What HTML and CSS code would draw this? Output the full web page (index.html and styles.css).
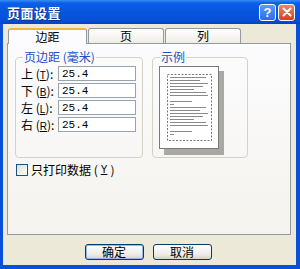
FILE: index.html
```html
<!DOCTYPE html>
<html lang="zh-CN">
<head>
<meta charset="utf-8">
<title>页面设置</title>
<link rel="stylesheet" href="styles.css">
</head>
<body>
  <div class="window">
    <div class="titlebar">
      <span class="title">页面设置</span>
      <div class="ctrls">
        <span class="cbtn help">?</span>
        <span class="cbtn close">
          <svg width="10" height="10" viewBox="0 0 10 10"><path d="M1.5 1.5 L8.5 8.5 M8.5 1.5 L1.5 8.5" stroke="#fff" stroke-width="2" stroke-linecap="round"/></svg>
        </span>
      </div>
    </div>
    <div class="client">
      <div class="tabs">
        <div class="tab active">边距</div>
        <div class="tab">页</div>
        <div class="tab">列</div>
      </div>
      <div class="panel">
        <div class="groups">
          <fieldset class="group margins">
            <legend>页边距 (毫米)</legend>
            <div class="row"><span class="lbl">上 (<u>T</u>):</span><input class="num" type="text" value="25.4"></div>
            <div class="row"><span class="lbl">下 (<u>B</u>):</span><input class="num" type="text" value="25.4"></div>
            <div class="row"><span class="lbl">左 (<u>L</u>):</span><input class="num" type="text" value="25.4"></div>
            <div class="row"><span class="lbl">右 (<u>R</u>):</span><input class="num" type="text" value="25.4"></div>
          </fieldset>
          <fieldset class="group sample">
            <legend>示例</legend>
            <svg class="preview" width="66" height="90" viewBox="0 0 66 90">
              <rect x="5" y="5" width="60" height="84" fill="#a8a8a4"/>
              <rect x="0.5" y="0.5" width="59" height="82" fill="#fff" stroke="#7a7a7a"/>
              <rect x="8.5" y="8.5" width="44" height="66" fill="none" stroke="#555" stroke-dasharray="2 1.5" stroke-width="0.8"/>
              <g fill="#8a8a8a">
                <rect x="11" y="11" width="36" height="1"/>
                <rect x="11" y="14" width="30" height="1"/>
                <rect x="11" y="17" width="38" height="1"/>
                <rect x="11" y="20" width="33" height="1"/>
                <rect x="11" y="23" width="24" height="1"/>
                <rect x="11" y="26" width="36" height="1"/>
                <rect x="11" y="29" width="38" height="1"/>
                <rect x="11" y="35" width="22" height="1"/>
                <rect x="11" y="38" width="4" height="1"/>
                <rect x="11" y="41" width="36" height="1"/>
                <rect x="11" y="44" width="30" height="1"/>
                <rect x="11" y="47" width="38" height="1"/>
                <rect x="11" y="50" width="33" height="1"/>
                <rect x="11" y="53" width="24" height="1"/>
                <rect x="11" y="56" width="36" height="1"/>
                <rect x="11" y="59" width="38" height="1"/>
                <rect x="11" y="65" width="22" height="1"/>
                <rect x="11" y="68" width="4" height="1"/>
              </g>
            </svg>
          </fieldset>
        </div>
        <label class="check"><span class="box"></span>只打印数据 (<u>Y</u>)</label>
      </div>
      <div class="buttons">
        <div class="pbtn default">确定</div>
        <div class="pbtn">取消</div>
      </div>
    </div>
  </div>
</body>
</html>
```

FILE: styles.css
```css
/* XP 风格的对话框 */
body {
  margin: 0;
  overflow: hidden;
  font-family: "Noto Sans CJK SC", "Liberation Sans", sans-serif;
  font-size: 12px;
  color: #000;
}
.window {
  width: 300px;
  height: 269px;
  background: #0a4fd8;
  display: flex;
  flex-direction: column;
  box-sizing: border-box;
  padding: 0 4px 4px 3px;
}
.titlebar {
  height: 24px;
  margin: 0 -4px 0 -3px;
  padding: 0 4px 0 7px;
  display: flex;
  align-items: center;
  justify-content: space-between;
  background: linear-gradient(#3b8cf5 0, #0a5fe8 3px, #0855dd 12px, #0650d8 20px, #0440c4 24px);
}
.title {
  color: #fff;
  font-weight: bold;
  font-size: 13px;
  letter-spacing: 0.5px;
  text-shadow: 1px 1px 0 #0a2f8a;
}
.ctrls {
  display: flex;
  gap: 2px;
  padding-right: 1px;
}
.cbtn {
  width: 15px;
  height: 15px;
  border: 1px solid #fff;
  border-radius: 3px;
  display: flex;
  align-items: center;
  justify-content: center;
  color: #fff;
  font-weight: bold;
  font-size: 13px;
  font-family: "Liberation Sans", sans-serif;
}
.help {
  background: linear-gradient(#5a9bfb, #2a6cf0);
}
.close {
  background: linear-gradient(#e9876a, #d5421d);
}
.client {
  flex: 1;
  background: #ece9d8;
  display: flex;
  flex-direction: column;
  padding: 4px 5px 0 4px;
}
.tabs {
  display: flex;
  gap: 1px;
  padding-left: 1px;
  height: 15px;
  position: relative;
  z-index: 1;
}
.tab {
  width: 74px;
  height: 14px;
  border: 1px solid #919b9c;
  border-bottom: none;
  border-radius: 3px 3px 0 0;
  background: linear-gradient(#ffffff, #eeede5);
  text-align: center;
  line-height: 14px;
  font-size: 12px;
}
.tab.active {
  width: 77px;
  border-top: 2px solid #f2b53c;
  height: 14px;
  background: #fcfcfe;
  line-height: 13px;
}
.panel {
  height: 192px;
  border: 1px solid #919b9c;
  background: linear-gradient(#fcfcfe, #f4f3ee);
  padding: 6px 7px 0 7px;
  box-sizing: border-box;
}
.groups {
  display: flex;
  gap: 9px;
}
.group {
  margin: 0;
  height: 108px;
  box-sizing: border-box;
  border: 1px solid #d5d2c4;
  border-radius: 4px;
  padding: 2px 5px 0 5px;
}
.group legend {
  color: #1d4fc8;
  padding: 0 1px;
  margin-left: 2px;
  line-height: 14px;
  font-size: 12px;
}
.margins {
  width: 128px;
}
.sample {
  width: 96px;
}
.row {
  display: flex;
  align-items: center;
  height: 15px;
  margin-bottom: 2px;
}
.lbl {
  width: 37px;
  font-size: 12px;
  white-space: nowrap;
}
.lbl u {
  font-family: "Liberation Sans", sans-serif;
  font-size: 10px;
}
.num {
  width: 78px;
  height: 15px;
  box-sizing: border-box;
  border: 1px solid #97a3ad;
  padding: 0 3px;
  font-family: "Liberation Mono", monospace;
  font-size: 11px;
  background: #fff;
  outline: none;
}
.preview {
  display: block;
  margin-left: 1px;
}
.check {
  display: flex;
  align-items: center;
  gap: 3px;
  margin: 3px 0 0 1px;
  font-size: 12px;
}
.check u {
  font-family: "Liberation Sans", sans-serif;
  font-size: 10px;
}
.box {
  width: 10px;
  height: 10px;
  border: 1px solid #1c5180;
  background: linear-gradient(135deg, #dcdcd7, #fff);
}
.buttons {
  display: flex;
  justify-content: center;
  gap: 9px;
  margin-top: 9px;
  padding-right: 2px;
}
.pbtn {
  width: 57px;
  height: 14px;
  border: 1px solid #003c74;
  border-radius: 3px;
  background: linear-gradient(#ffffff, #ecebe6 70%, #d6d0c5);
  text-align: center;
  line-height: 14px;
  font-size: 12px;
}
.pbtn.default {
  box-shadow: inset 0 0 0 1px #98b8ea;
}
```
